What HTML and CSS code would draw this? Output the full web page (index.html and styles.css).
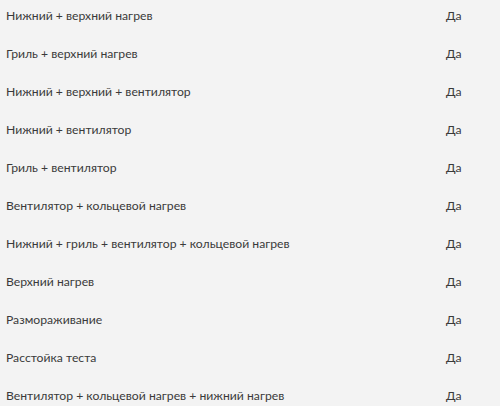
FILE: index.html
```html
<!DOCTYPE html>
<html lang="ru">
<head>
<meta charset="utf-8">
<link rel="stylesheet" href="styles.css">
</head>
<body>
<div class="spec">
  <div class="row"><span class="name">Нижний + верхний нагрев</span><span class="val">Да</span></div>
  <div class="row"><span class="name">Гриль + верхний нагрев</span><span class="val">Да</span></div>
  <div class="row"><span class="name">Нижний + верхний + вентилятор</span><span class="val">Да</span></div>
  <div class="row"><span class="name">Нижний + вентилятор</span><span class="val">Да</span></div>
  <div class="row"><span class="name">Гриль + вентилятор</span><span class="val">Да</span></div>
  <div class="row"><span class="name">Вентилятор + кольцевой нагрев</span><span class="val">Да</span></div>
  <div class="row"><span class="name">Нижний + гриль + вентилятор + кольцевой нагрев</span><span class="val">Да</span></div>
  <div class="row"><span class="name">Верхний нагрев</span><span class="val">Да</span></div>
  <div class="row"><span class="name">Размораживание</span><span class="val">Да</span></div>
  <div class="row"><span class="name">Расстойка теста</span><span class="val">Да</span></div>
  <div class="row"><span class="name">Вентилятор + кольцевой нагрев + нижний нагрев</span><span class="val">Да</span></div>
</div>
</body>
</html>
```
FILE: styles.css
```css
html, body {
  margin: 0;
  padding: 0;
  background: #f3f3f3;
}
body {
  overflow: hidden;
  height: 406px;
}
.spec {
  margin-top: -3px;
  font-family: "Lato", "Noto Sans", sans-serif;
  font-size: 12.2px;
  color: #3a3a3a;
}
.row {
  display: grid;
  grid-template-columns: 440px 1fr;
  height: 38px;
  line-height: 38px;
  padding-left: 6px;
}
.val {
  padding-left: 0;
}
```
